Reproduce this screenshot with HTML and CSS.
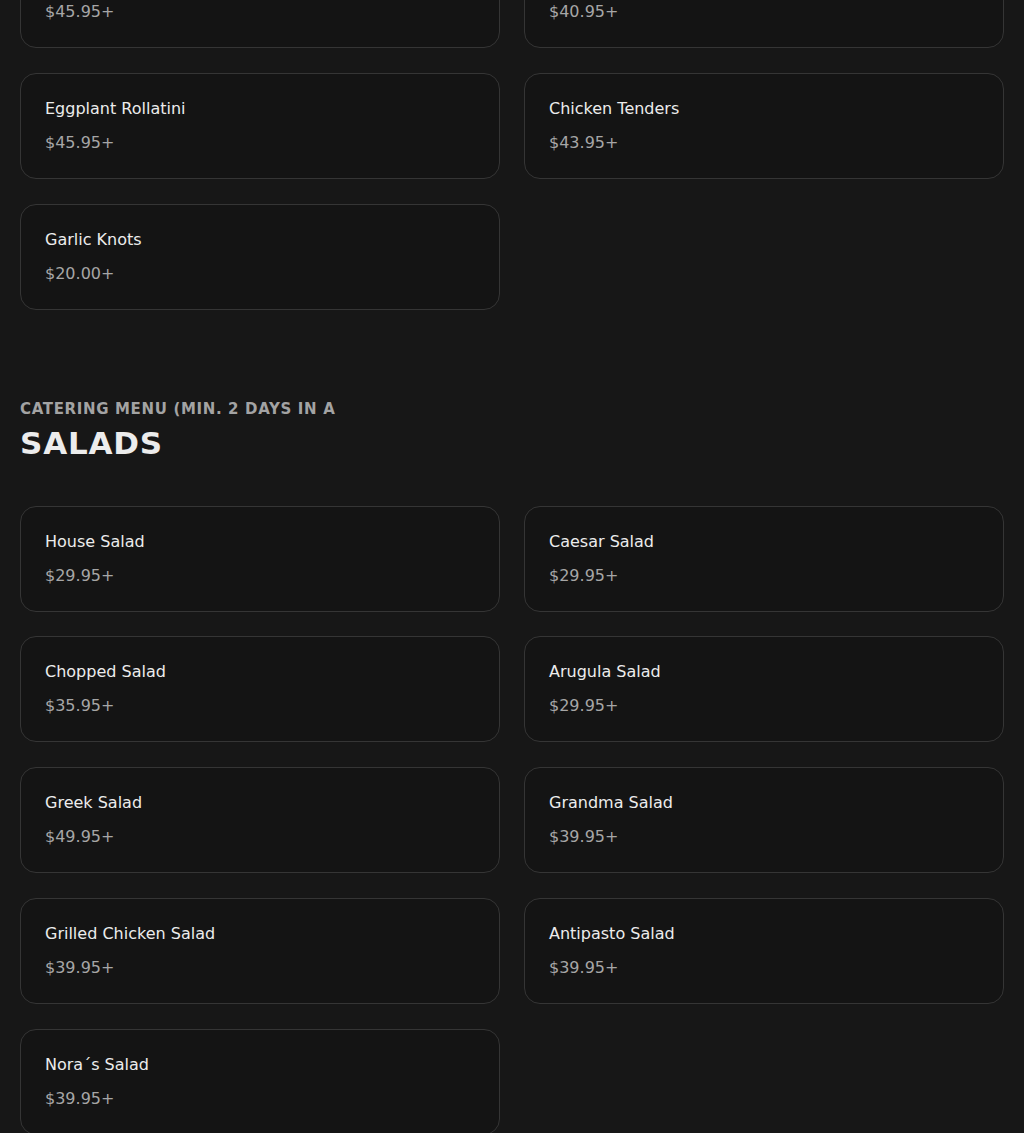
FILE: index.html
```html
<!DOCTYPE html>
<html lang="en">
<head>
<meta charset="utf-8">
<title>Catering Menu</title>
<link rel="stylesheet" href="styles.css">
</head>
<body>
<main class="menu">
  <section class="section section-first">
    <div class="grid">
      <div class="card"><div class="name">Fried Calamari</div><div class="price">$45.95+</div></div>
      <div class="card"><div class="name">Mozzarella Sticks</div><div class="price">$40.95+</div></div>
      <div class="card"><div class="name">Eggplant Rollatini</div><div class="price">$45.95+</div></div>
      <div class="card"><div class="name">Chicken Tenders</div><div class="price">$43.95+</div></div>
      <div class="card"><div class="name">Garlic Knots</div><div class="price">$20.00+</div></div>
    </div>
  </section>
  <section class="section">
    <header class="section-head">
      <div class="eyebrow">CATERING MENU (MIN. 2 DAYS IN A</div>
      <h2 class="title">SALADS</h2>
    </header>
    <div class="grid">
      <div class="card"><div class="name">House Salad</div><div class="price">$29.95+</div></div>
      <div class="card"><div class="name">Caesar Salad</div><div class="price">$29.95+</div></div>
      <div class="card"><div class="name">Chopped Salad</div><div class="price">$35.95+</div></div>
      <div class="card"><div class="name">Arugula Salad</div><div class="price">$29.95+</div></div>
      <div class="card"><div class="name">Greek Salad</div><div class="price">$49.95+</div></div>
      <div class="card"><div class="name">Grandma Salad</div><div class="price">$39.95+</div></div>
      <div class="card"><div class="name">Grilled Chicken Salad</div><div class="price">$39.95+</div></div>
      <div class="card"><div class="name">Antipasto Salad</div><div class="price">$39.95+</div></div>
      <div class="card"><div class="name">Nora´s Salad</div><div class="price">$39.95+</div></div>
    </div>
  </section>
</main>
</body>
</html>
```
FILE: styles.css
```css
html, body {
  margin: 0;
  padding: 0;
  background: #171717;
}
body {
  font-family: "DejaVu Sans", Verdana, sans-serif;
  color: #ececec;
  overflow: hidden;
}
.menu {
  padding: 0 20px;
  margin-top: -58px;
}
.section-first {
  margin-bottom: 89px;
}
.grid {
  display: grid;
  grid-template-columns: 1fr 1fr;
  column-gap: 24px;
  row-gap: 24.75px;
}
.card {
  background: #141414;
  border: 1px solid #353535;
  border-radius: 16px;
  padding: 23px 24px;
}
.name {
  font-size: 16px;
  line-height: 24px;
  color: #ececec;
}
.price {
  font-size: 16px;
  line-height: 24px;
  margin-top: 10px;
  color: #a6a6a6;
}
.section-head {
  margin-bottom: 45px;
}
.eyebrow {
  font-size: 15px;
  line-height: 20px;
  font-weight: bold;
  letter-spacing: 0.65px;
  color: #a3a3a3;
  white-space: nowrap;
}
.title {
  margin: 6px 0 0;
  font-size: 31px;
  line-height: 36px;
  font-weight: bold;
  letter-spacing: 0.8px;
  color: #ececec;
}
```
